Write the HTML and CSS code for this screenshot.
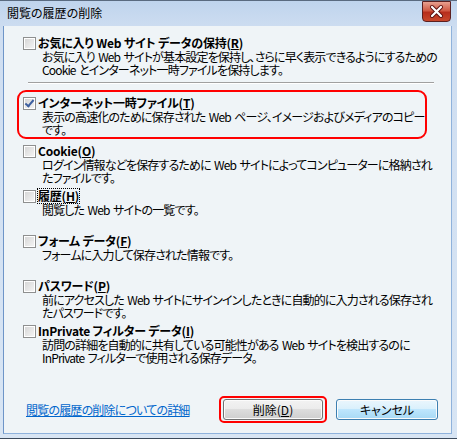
FILE: index.html
```html
<!DOCTYPE html>
<html>
  <head>
    <title>閲覧の履歴の削除</title>
    <meta name="viewport" content="width=device-width, initial-scale=1" />
    <link rel="stylesheet" href="styles.css">
  </head>
  <body>
    <div class="window">
      <div class="titlebar">
        <span class="title">閲覧の履歴の削除</span>
        <span class="close">
          <svg width="27" height="19" viewBox="0 0 27 19">
            <path d="M9 5 L18 14 M18 5 L9 14" stroke="#5a1010" stroke-width="4" stroke-linecap="round"/>
            <path d="M9 5 L18 14 M18 5 L9 14" stroke="#fff" stroke-width="2.2" stroke-linecap="round"/>
          </svg>
        </span>
      </div>
      <div class="client">
        <div class="item first">
          <div class="label"><span class="box"></span><b>お気に入り Web サイト データの保持(<u>R</u>)</b></div>
          <div class="desc">お気に入り Web サイトが基本設定を保持し、さらに早く表示できるようにするための<br>Cookie とインターネット一時ファイルを保持します。</div>
        </div>
        <div class="sep"></div>
        <div class="item marked">
          <div class="label"><span class="box checked"></span><b>インターネット一時ファイル(<u>T</u>)</b></div>
          <div class="desc">表示の高速化のために保存された Web ページ、イメージおよびメディアのコピー<br>です。</div>
        </div>
        <div class="item">
          <div class="label"><span class="box"></span><b>Cookie(<u>O</u>)</b></div>
          <div class="desc">ログイン情報などを保存するために Web サイトによってコンピューターに格納され<br>たファイルです。</div>
        </div>
        <div class="item">
          <div class="label"><span class="box"></span><b class="focus">履歴(<u>H</u>)</b></div>
          <div class="desc">閲覧した Web サイトの一覧です。</div>
        </div>
        <div class="item">
          <div class="label"><span class="box"></span><b>フォーム データ(<u>F</u>)</b></div>
          <div class="desc">フォームに入力して保存された情報です。</div>
        </div>
        <div class="item">
          <div class="label"><span class="box"></span><b>パスワード(<u>P</u>)</b></div>
          <div class="desc">前にアクセスした Web サイトにサインインしたときに自動的に入力される保存され<br>たパスワードです。</div>
        </div>
        <div class="item">
          <div class="label"><span class="box"></span><b>InPrivate フィルター データ(<u>I</u>)</b></div>
          <div class="desc">訪問の詳細を自動的に共有している可能性がある Web サイトを検出するのに<br>InPrivate フィルターで使用される保存データ。</div>
        </div>
        <div class="footer">
          <a class="link" href="#">閲覧の履歴の削除についての詳細</a>
          <span class="ring"><span class="button">削除(<u>D</u>)</span></span>
          <span class="button cancel">キャンセル</span>
        </div>
      </div>
    </div>
  </body>
</html>
```

FILE: styles.css
```css
html {
  font-family: "Noto Sans CJK JP", "Liberation Sans", sans-serif;
  font-size: 12px;
  font-feature-settings: "palt";
}
body {
  margin: 0;
  width: 457px;
  height: 440px;
  overflow: hidden;
}
.window {
  display: flex;
  flex-direction: column;
  height: 439px;
  border-bottom: 1px solid #3c4a5c;
  border-top: 1px solid #5a6b80;
  background: linear-gradient(#bfd4ed, #cfdef1 30px, #d8e5f4);
  box-sizing: border-box;
}
.titlebar {
  display: flex;
  align-items: center;
  justify-content: space-between;
  height: 24px;
  padding: 0 6px 0 7px;
}
.title {
  color: #000;
  font-size: 12px;
  line-height: 14px;
}
.close {
  display: flex;
  width: 27px;
  height: 19px;
  margin-top: -4px;
  border: 1px solid #5c2020;
  border-radius: 0 0 4px 4px;
  background: linear-gradient(#e8a090, #d05a44 45%, #b72e1c 55%, #c8482c);
}
.client {
  flex: 1;
  margin: 1px 5px 4px 3px;
  border-left: 1px solid #6e95c8;
  border-right: 1px solid #8fb2dc;
  border-bottom: 1px solid #8fb2dc;
  background: #eff4f7;
  padding: 10px 0 0 18px;
}
.item {
  height: 45px;
  padding-left: 1px;
}
.label {
  display: flex;
  align-items: center;
  height: 14px;
  line-height: 14px;
  white-space: nowrap;
}
.label b {
  margin-left: 2px;
  letter-spacing: -0.2px;
}
.focus {
  outline: 1px dotted #000;
}
.desc {
  padding-left: 19px;
  line-height: 13px;
  white-space: nowrap;
  letter-spacing: -0.85px;
  word-spacing: 1.5px;
}
.box {
  position: relative;
  width: 11px;
  height: 11px;
  border: 1px solid #8e8f8f;
  background: linear-gradient(135deg, #d4d4d4, #f6f6f6);
  box-shadow: inset 0 0 0 1px #fff;
  box-sizing: content-box;
}
.box.checked::after {
  content: '';
  position: absolute;
  left: 3px;
  top: 0px;
  width: 3px;
  height: 7px;
  border-right: 2px solid #3c5f9f;
  border-bottom: 2px solid #3c5f9f;
  transform: rotate(40deg);
}
.sep {
  width: 406px;
  margin: 1px 0 0 6px;
  border-top: 1px solid #a0a0a0;
  border-bottom: 1px solid #fff;
}
.item.marked {
  height: auto;
  margin: 6px 0 5px -5px;
  width: 402px;
  padding: 4px 0 1px 4px;
  border: 2px solid #f00;
  border-radius: 9px;
}
.footer {
  display: flex;
  align-items: center;
  margin-top: 27px;
  padding-left: 4px;
}
.link {
  color: #0066cc;
  width: 193px;
  letter-spacing: -0.8px;
}
.ring {
  display: flex;
  padding: 1px 2px;
  border: 2px solid #f00;
  border-radius: 5px;
}
.button {
  display: flex;
  align-items: center;
  justify-content: center;
  width: 98px;
  height: 19px;
  border: 1px solid #707070;
  border-radius: 3px;
  background: linear-gradient(#f2f2f2, #ebebeb 50%, #dddddd 50%, #cfcfcf);
  box-shadow: inset 0 0 0 1px #fbfbfb;
}
.button.cancel {
  margin-left: 9px;
  width: 100px;
  border-color: #3c7fb1;
  background: linear-gradient(#eaf6fd, #d9f0fc 50%, #bee6fd 50%, #a7d9f5);
}
```
